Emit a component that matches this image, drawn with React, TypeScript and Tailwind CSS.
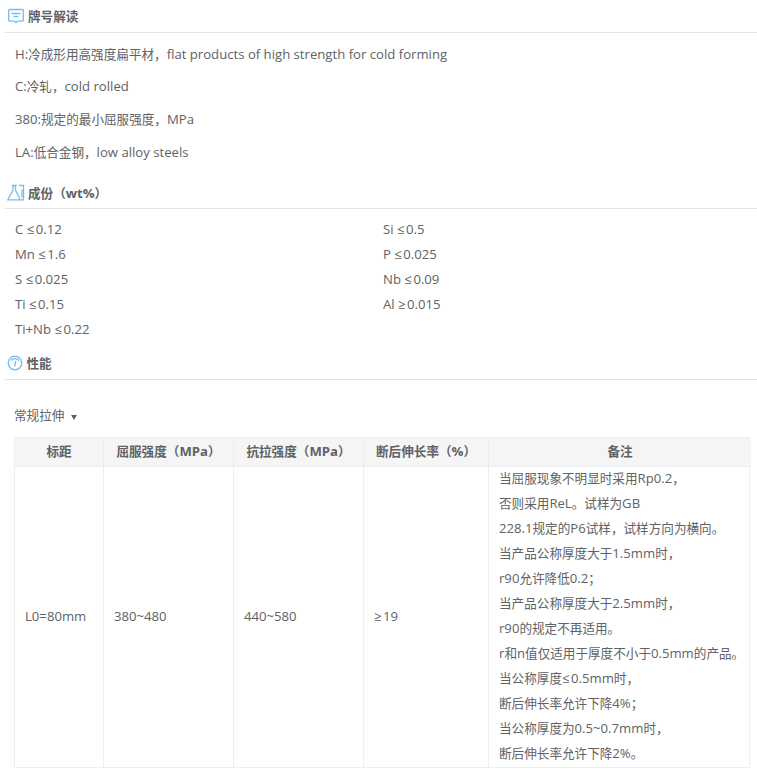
const font = { fontFamily: '"Open Sans", "Noto Sans CJK SC", sans-serif' };

function T({ children }: { children: string }) {
  const parts = children.split(/([\u3000-\u303f\u4e00-\u9fff\uff00-\uffef]+|≤|≥)/).filter(Boolean);
  return (
    <>
      {parts.map((p, i) =>
        p === '≤' || p === '≥' ? (
          <span key={i} className="tracking-[1.5px]">{p}</span>
        ) : /[\u3000-\u303f\u4e00-\u9fff\uff00-\uffef]/.test(p) ? (
          <span key={i} className="text-[12.6px]">{p}</span>
        ) : (
          <span key={i}>{p}</span>
        ),
      )}
    </>
  );
}

function Heading({ icon, title, gap, text = '' }: { icon: React.ReactNode; title: string; gap: string; text?: string }) {
  return (
    <div className={`flex h-[33px] items-center border-b border-[#e4e4e4] ${gap}`}>
      {icon}
      <span className={`font-bold leading-[33px] text-[#606266] ${text}`}><T>{title}</T></span>
    </div>
  );
}

const MsgIcon = (
  <svg width="16" height="16" viewBox="0 0 16 16" fill="none" stroke="#74bdf0" strokeWidth="1.3" className="ml-[3px]">
    <path d="M1.500 1.500h13a.8.8 0 0 1 .8.8v10a.8.8 0 0 1-.8.8H9.500L8 14.800 6.500 13.100h-5a.8.8 0 0 1-.8-.8v-10a.8.8 0 0 1 .8-.8z" />
    <path d="M3.500 5.500h9M5.500 8.500h5" />
  </svg>
);
const FlaskIcon = (
  <svg width="18" height="17" viewBox="0 0 18 17" fill="none" stroke="#74bdf0" strokeWidth="1.300" className="ml-[2px]">
    <path d="M5 1.500h4.500M6 1.500v4.500L.8 15.800h12.400L8.500 6V1.500" />
    <path d="M12 1.500h4.500V15a1 1 0 0 1-1 1h-1.500" />
    <path d="M15 5.500v8" />
  </svg>
);
const GaugeIcon = (
  <svg width="16" height="16" viewBox="0 0 16 16" fill="none" stroke="#74bdf0" strokeWidth="1.300" className="ml-[1.500px]">
    <circle cx="8" cy="8" r="6.800" />
    <path d="M4.200 5.500a4.800 4.800 0 0 1 7.600 0M8.800 6 7.600 11.500" />
  </svg>
);

const comps = ['C ≤0.12', 'Si ≤0.5', 'Mn ≤1.6', 'P ≤0.025', 'S ≤0.025', 'Nb ≤0.09', 'Ti ≤0.15', 'Al ≥0.015', 'Ti+Nb ≤0.22'];
const notes = [
  '当屈服现象不明显时采用Rp0.2，',
  '否则采用ReL。试样为GB',
  '228.1规定的P6试样，试样方向为横向。',
  '当产品公称厚度大于1.5mm时，',
  'r90允许降低0.2；',
  '当产品公称厚度大于2.5mm时，',
  'r90的规定不再适用。',
  'r和n值仅适用于厚度不小于0.5mm的产品。',
  '当公称厚度≤0.5mm时，',
  '断后伸长率允许下降4%；',
  '当公称厚度为0.5~0.7mm时，',
  '断后伸长率允许下降2%。',
];
const heads = ['标距', '屈服强度（MPa）', '抗拉强度（MPa）', '断后伸长率（%）', '备注'];
const vals = ['L0=80mm', '380~480', '440~580', '≥19'];

export default function App() {
  return (
    <div style={font} className="h-[776px] w-[757px] overflow-hidden bg-white pl-[5px] text-[13.15px] text-[#606266]">
      <Heading icon={MsgIcon} title="牌号解读" gap="gap-[4px]" />
      <div className="pl-[10px] pt-[5px]">
        <p className="h-[32px] leading-[32px]"><T>H:冷成形用高强度扁平材，flat products of high strength for cold forming</T></p>
        <p className="h-[33px] leading-[32px]"><T>C:冷轧，cold rolled</T></p>
        <p className="h-[33px] leading-[33px]"><T>380:规定的最小屈服强度，MPa</T></p>
        <p className="h-[33px] leading-[33px]"><T>LA:低合金钢，low alloy steels</T></p>
      </div>
      <div className="mt-[7px]">
        <Heading icon={FlaskIcon} title="成份（wt%）" gap="gap-[3px]" text="pt-[2px]" />
      </div>
      <div className="grid grid-cols-[368px_1fr] pl-[10px] pt-[8px]">
        {comps.map((c) => (
          <div key={c} className="h-[25px] leading-[25px]"><T>{c}</T></div>
        ))}
      </div>
      <div className="pt-[5px]">
        <Heading icon={GaugeIcon} title="性能" gap="gap-[4px]" />
      </div>
      <div className="ml-[9px] mt-[23px] flex h-[26px] items-center">
        <T>常规拉伸</T>
        <span className="ml-[7px] mt-[2px] h-0 w-0 border-x-[3.5px] border-t-[5px] border-x-transparent border-t-[#606266]" />
      </div>
      <div className="ml-[9px] mt-[8px] grid w-[736px] grid-cols-[89px_130px_130px_125px_262px] border border-[#ebeef5]">
        {heads.map((h, i) => (
          <div key={h} className={`flex h-[29px] items-center justify-center border-b border-[#ebeef5] bg-[#f5f5f5] font-bold ${i < 4 ? 'border-r' : ''}`}>
            <span><T>{h}</T></span>
          </div>
        ))}
        {vals.map((v) => (
          <div key={v} className="flex items-center border-r border-[#ebeef5] pl-[10px]"><span><T>{v}</T></span></div>
        ))}
        <div className="-mt-px pb-px pl-[10px]">
          {notes.map((n) => (
            <div key={n} className="h-[25px] whitespace-nowrap leading-[25px]"><T>{n}</T></div>
          ))}
        </div>
      </div>
    </div>
  );
}
